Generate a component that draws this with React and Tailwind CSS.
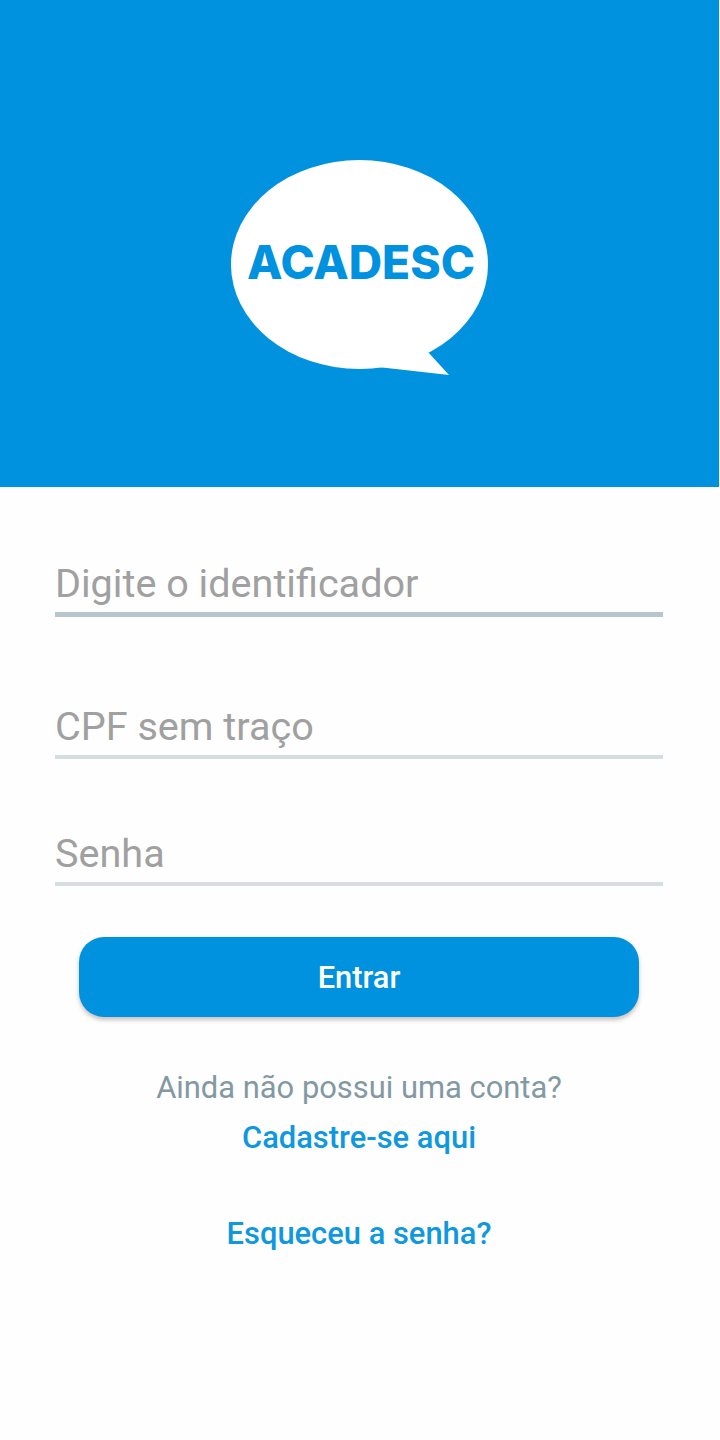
import { useState } from "react";

const Logo = () => (
  <svg width="260" height="220" viewBox="0 0 260 220" className="ml-px" aria-label="ACADESC">
    <ellipse cx="129.5" cy="105.5" rx="128.5" ry="104.5" fill="#fff" />
    <path d="M140 208.2 L148 208 L219 216 L198 193 Z" fill="#fff" />
    <text
      x="17"
      y="120"
      fontFamily="Inter, 'Liberation Sans', sans-serif"
      fontWeight="800"
      fontSize="46"
      fill="#0092df"
      textLength="228"
      lengthAdjust="spacingAndGlyphs"
    >
      ACADESC
    </text>
  </svg>
);

const Login = () => {
  const [form, setForm] = useState({ identificador: "", cpf: "", senha: "" });

  const handleChange = (e) => {
    setForm({ ...form, [e.target.name]: e.target.value });
  };

  const inputClass =
    "block w-full h-[60px] pt-0.5 text-[39.6px] text-gray-700 placeholder:text-[#a0a0a0] outline-none bg-transparent";

  return (
    <div className="w-[720px] h-[1440px] bg-[#fefefe] overflow-hidden font-['Roboto',sans-serif]">
      <header className="w-[719px] h-[487px] bg-[#0092df] flex justify-center pt-[159px]">
        <Logo />
      </header>

      <form className="flex flex-col px-[55px] w-[718px]" onSubmit={(e) => e.preventDefault()}>
        <div className="mt-[65px] border-b-[5px] border-[#b7c5ce]">
          <input
            className={inputClass}
            name="identificador"
            placeholder="Digite o identificador"
            value={form.identificador}
            onChange={handleChange}
          />
        </div>
        <div className="mt-[78px] border-b-4 border-[#d5dde1]">
          <input
            className={inputClass}
            name="cpf"
            placeholder="CPF sem traço"
            value={form.cpf}
            onChange={handleChange}
          />
        </div>
        <div className="mt-[63px] border-b-4 border-[#d5dde1]">
          <input
            className={inputClass}
            type="password"
            name="senha"
            placeholder="Senha"
            value={form.senha}
            onChange={handleChange}
          />
        </div>
        <button
          type="submit"
          className="mt-[51px] mx-6 h-[80px] pt-[3px] rounded-[25px] bg-[#0092df] text-white text-[30.8px] font-medium shadow-[0_3px_4px_rgba(80,50,40,0.3)]"
        >
          Entrar
        </button>
      </form>

      <div className="w-[718px] mt-[49px] flex flex-col items-center text-[30.9px] leading-[44px]">
        <p className="text-[#8299a3]">Ainda não possui uma conta?</p>
        <a href="#cadastro" className="mt-[6px] font-medium text-[#0f98de]">Cadastre-se aqui</a>
        <a href="#senha" className="mt-[52px] font-medium text-[#0f98de]">Esqueceu a senha?</a>
      </div>
    </div>
  );
};

export default Login;
